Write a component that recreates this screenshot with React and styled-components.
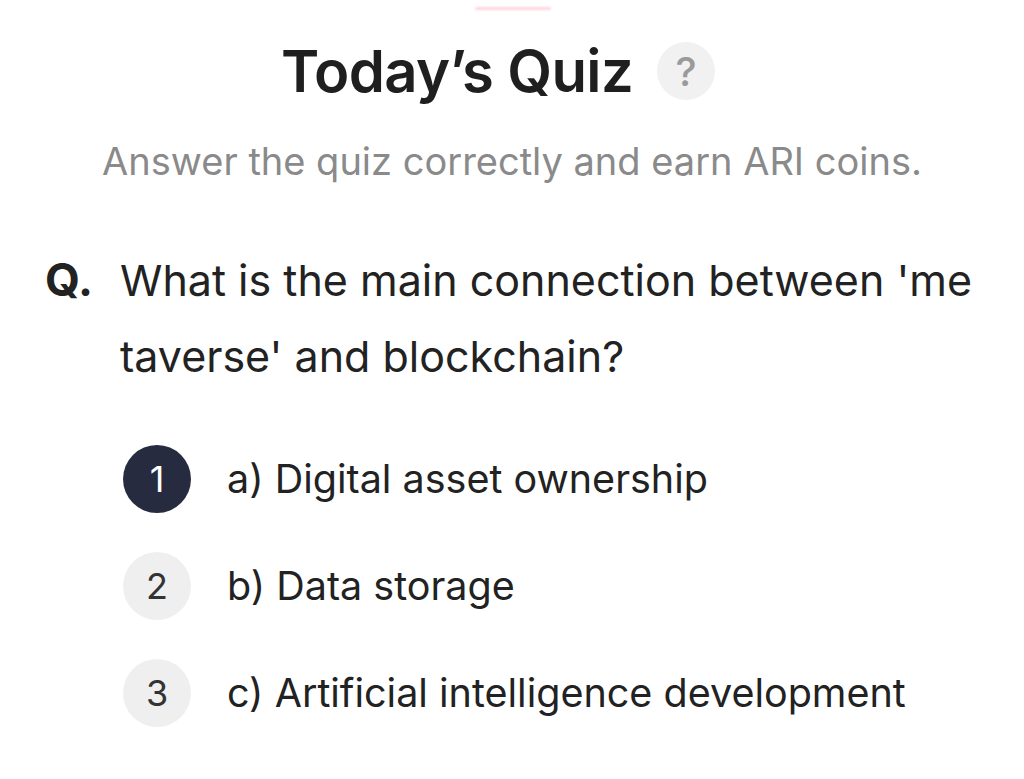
import React from 'react'
import styled, { createGlobalStyle } from 'styled-components'

const GlobalStyle = createGlobalStyle`
  html, body {
    margin: 0;
    padding: 0;
    background: #ffffff;
  }
  body {
    font-family: Inter, "Noto Sans", "Liberation Sans", sans-serif;
    color: #222222;
  }
`

const options = [
  { num: 1, text: 'a) Digital asset ownership', selected: true },
  { num: 2, text: 'b) Data storage' },
  { num: 3, text: 'c) Artificial intelligence development' },
]

export default function App() {
  return (
    <Page>
      <GlobalStyle />
      <TopMark />
      <Header>
        <Title>Today’s Quiz</Title>
        <HelpBadge>?</HelpBadge>
      </Header>
      <Subtitle>Answer the quiz correctly and earn ARI coins.</Subtitle>
      <Question>
        <QLabel>Q.</QLabel>
        <QText>What is the main connection between 'me taverse' and blockchain?</QText>
      </Question>
      <OptionList>
        {options.map(o => (
          <Option key={o.num}>
            <NumBadge selected={o.selected}>{o.num}</NumBadge>
            <OptionText>{o.text}</OptionText>
          </Option>
        ))}
      </OptionList>
    </Page>
  )
}

const Page = styled.div`
  width: 1024px;
  height: 779px;
  overflow: hidden;
  display: flex;
  flex-direction: column;
  align-items: center;
  padding-top: 7px;
  box-sizing: border-box;
`

const TopMark = styled.div`
  width: 76px;
  height: 3px;
  border-radius: 2px;
  background: #ffd3de;
  filter: blur(1px);
  margin-left: 2px;
`

const Header = styled.div`
  display: flex;
  align-items: center;
  gap: 24px;
  margin-top: 32px;
  margin-right: 28px;
`

const Title = styled.h1`
  margin: 0;
  font-size: 58px;
  font-weight: 600;
  letter-spacing: -0.6px;
  color: #1f1f1f;
  line-height: 1;
`

const HelpBadge = styled.div`
  width: 58px;
  height: 58px;
  border-radius: 50%;
  background: #f1f1f1;
  color: #9a9a9a;
  font-size: 40px;
  font-weight: 500;
  display: flex;
  align-items: center;
  justify-content: center;
`

const Subtitle = styled.p`
  margin: 38px 0 0;
  font-size: 38px;
  color: #8a8a8a;
  letter-spacing: 0;
`

const Question = styled.div`
  align-self: stretch;
  display: flex;
  gap: 27px;
  padding: 0 20px 0 45px;
  margin-top: 58px;
`

const QLabel = styled.span`
  font-size: 45px;
  font-weight: 700;
  line-height: 76px;
  color: #222;
`

const QText = styled.span`
  font-size: 43px;
  font-weight: 400;
  line-height: 76px;
  letter-spacing: 0;
  color: #222;
`

const OptionList = styled.div`
  align-self: stretch;
  display: flex;
  flex-direction: column;
  gap: 39px;
  padding-left: 123px;
  margin-top: 51px;
`

const Option = styled.div`
  display: flex;
  align-items: center;
  gap: 36px;
`

const NumBadge = styled.div`
  width: 68px;
  height: 68px;
  border-radius: 50%;
  flex-shrink: 0;
  background: ${p => (p.selected ? '#262b40' : '#efefef')};
  color: ${p => (p.selected ? '#ffffff' : '#333333')};
  font-size: 36px;
  display: flex;
  align-items: center;
  justify-content: center;
`

const OptionText = styled.span`
  font-size: 39.5px;
  letter-spacing: 0;
  color: #222;
`
